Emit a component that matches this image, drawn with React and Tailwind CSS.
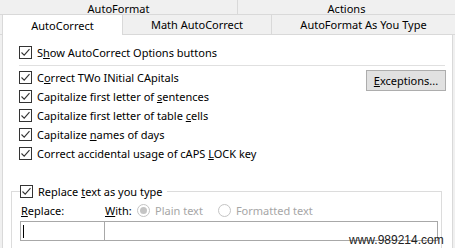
import React from 'react';

// small Win10-style checkbox, always ticked here
const Check = () => (
  <span className="w-[13px] h-[13px] border border-[#333333] bg-white flex items-center justify-center shrink-0">
    <svg width="11" height="11" viewBox="0 0 11 11">
      <path d="M1.5 5.5 L4.2 8.2 L9.5 2.2" fill="none" stroke="#333333" strokeWidth="1.1" />
    </svg>
  </span>
);

const Radio = ({ on }) => (
  <span className="w-[13px] h-[13px] rounded-full border border-[#c4c4c4] bg-white flex items-center justify-center shrink-0">
    {on && <span className="w-[7px] h-[7px] rounded-full bg-[#c4c4c4]" />}
  </span>
);

const Row = ({ children }) => (
  <div className="flex items-center gap-[5px] h-[19px]">
    <Check />
    <span>{children}</span>
  </div>
);

export default function App() {
  return (
    <div
      className="relative w-[455px] h-[248px] overflow-hidden bg-[#f0f0f0] text-[11px] text-black leading-none"
      style={{ fontFamily: '"Noto Sans", "Open Sans", sans-serif' }}
    >
      {/* back row of tabs */}
      <div className="flex h-[15px] border-b border-[#d9d9d9]">
        <div className="w-[238px] flex items-center justify-center pt-[2px] border-r border-[#d9d9d9]">AutoFormat</div>
        <div className="flex-1 flex items-center justify-center pt-[2px]">Actions</div>
      </div>

      {/* front row of tabs */}
      <div className="flex h-[20px]">
        <div className="w-[2px] border-b border-[#d9d9d9]" />
        <div className="w-[121px] bg-white border-l border-r border-[#d9d9d9] flex items-center justify-center">AutoCorrect</div>
        <div className="w-[149px] border-r border-b border-[#d9d9d9] flex items-center justify-center">Math AutoCorrect</div>
        <div className="flex-1 border-b border-[#d9d9d9] flex items-center justify-center">AutoFormat As You Type</div>
      </div>

      {/* panel */}
      <div className="ml-[2px] mr-[2px] h-[213px] bg-white border-l border-r border-[#d9d9d9] pl-[16px] pt-[8px]">
        <Row>S<u>h</u>ow AutoCorrect Options buttons</Row>
        <div className="mt-[3px] mr-[7px] h-px bg-[#e0e0e0]" />

        <div className="flex mt-[2px] pr-[6px]">
          <div className="flex-1 flex flex-col">
            <Row>C<u>o</u>rrect TWo INitial CApitals</Row>
            <Row>Capitalize first letter of <u>s</u>entences</Row>
            <Row>Capitalize first letter of table <u>c</u>ells</Row>
            <Row>Capitalize <u>n</u>ames of days</Row>
            <Row>Correct accidental usage of cAPS <u>L</u>OCK key</Row>
          </div>
          <button className="mt-[2px] w-[80px] h-[21px] bg-[#e1e1e1] border border-[#adadad] text-[11px] flex items-center justify-center">
            <span><u>E</u>xceptions...</span>
          </button>
        </div>

        <fieldset className="mt-[19px] -ml-[8px] mr-[10px] border border-[#dcdcdc] pl-[8px] pr-[3px] h-[80px]">
          <legend className="flex items-center gap-[5px] h-[18px] pr-[4px]">
            <Check />
            <span>Replace <u>t</u>ext as you type</span>
          </legend>
          <div className="flex items-center h-[16px] mt-[2px]">
            <span className="w-[85px] pl-px"><u>R</u>eplace:</span>
            <span className="w-[32px]"><u>W</u>ith:</span>
            <span className="flex items-center gap-[5px] text-[#a6a6a6]">
              <Radio on />
              <span>Plain text</span>
            </span>
            <span className="ml-[15px] flex items-center gap-[5px] text-[#a6a6a6]">
              <Radio />
              <span>Formatted text</span>
            </span>
          </div>
          <div className="flex mt-[3px] h-[20px]">
            <div className="w-[85px] border border-[#a8a8a8] flex items-center pl-[2px]">
              <span className="w-px h-[13px] bg-black" />
            </div>
            <div className="flex-1 border border-l-0 border-[#a8a8a8]" />
          </div>
        </fieldset>
      </div>

      <span
        className="absolute left-[349px] top-[234px] text-[12px] text-[#222222] leading-none"
        style={{ fontFamily: '"Liberation Sans", sans-serif' }}
      >
        www.989214.com
      </span>
    </div>
  );
}
